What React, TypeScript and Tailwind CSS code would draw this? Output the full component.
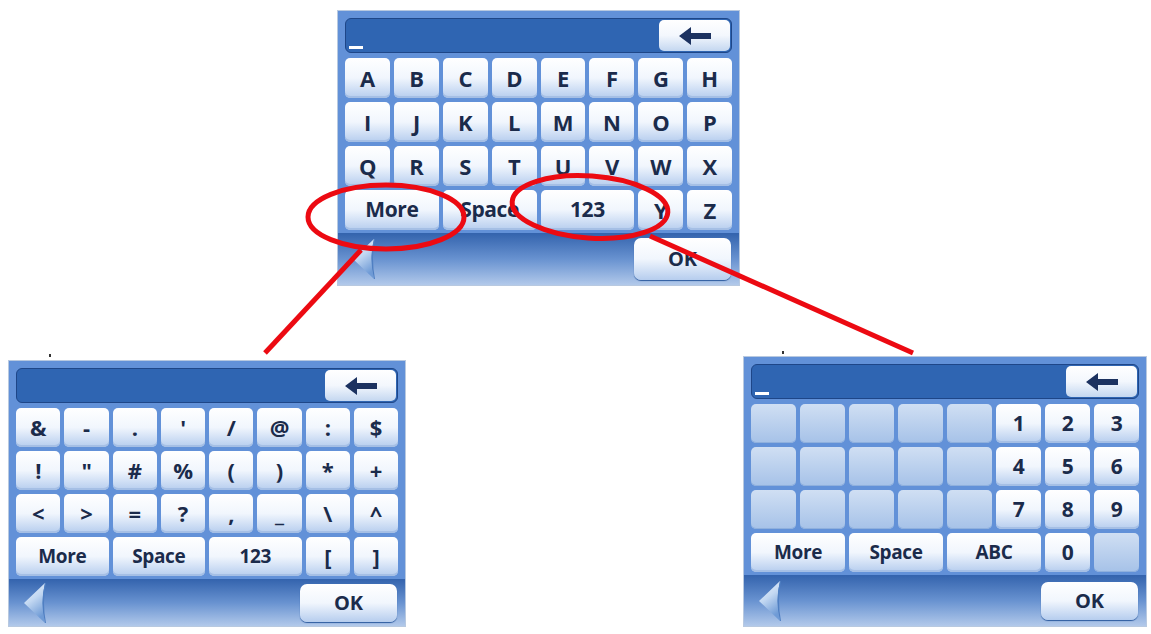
import React from 'react';

type KeyDef = { label?: string; span?: boolean; empty?: boolean };

const font = { fontFamily: '"Open Sans", "Noto Sans", Arial, sans-serif' };

const k = (s: string): KeyDef[] => s.split(' ').map(label => ({ label }));
const blanks = (n: number): KeyDef[] => Array.from({ length: n }, () => ({ empty: true }));

const alphaRows: KeyDef[][] = [
    k('A B C D E F G H'),
    k('I J K L M N O P'),
    k('Q R S T U V W X'),
    [{ label: 'More', span: true }, { label: 'Space', span: true }, { label: '123', span: true }, { label: 'Y' }, { label: 'Z' }],
];

const symbolRows: KeyDef[][] = [
    k('& - . \' / @ : $'),
    k('! " # % ( ) * +'),
    k('< > = ? , _ \\ ^'),
    [{ label: 'More', span: true }, { label: 'Space', span: true }, { label: '123', span: true }, { label: '[' }, { label: ']' }],
];

const numberRows: KeyDef[][] = [
    [...blanks(5), ...k('1 2 3')],
    [...blanks(5), ...k('4 5 6')],
    [...blanks(5), ...k('7 8 9')],
    [{ label: 'More', span: true }, { label: 'Space', span: true }, { label: 'ABC', span: true }, { label: '0' }, { empty: true }],
];

function BackArrow() {
    return (
        <svg width="32" height="18" viewBox="0 0 32 18">
            <path d="M0 9 L12 0 L12 6 L32 6 L32 12 L12 12 L12 18 Z" fill="#1c3260" />
        </svg>
    );
}

function PrevTriangle() {
    return (
        <svg width="24" height="42" viewBox="0 0 24 42">
            <defs>
                <linearGradient id="tri" x1="0" y1="0" x2="0.4" y2="1">
                    <stop offset="0" stopColor="#f2f7fd" />
                    <stop offset="0.5" stopColor="#c3d8f2" />
                    <stop offset="1" stopColor="#6f9bd6" />
                </linearGradient>
            </defs>
            <path d="M22 1 L1 21 L22 41 Q17 21 22 1 Z" fill="url(#tri)" />
            <path d="M22 1 Q17 21 22 41 L23 41 Q19 21 23 1 Z" fill="#4f7fc2" />
        </svg>
    );
}

function Key({ def, text, single }: { def: KeyDef; text: string; single: string }) {
    if (def.empty) {
        return (
            <div className={`${def.span ? 'col-span-2' : ''} rounded-[5px] bg-linear-to-b from-[#d0dff3] to-[#a6c2e8] shadow-[inset_0_-1px_0_#8fb0dd]`} />
        );
    }
    const size = def.label && def.label.length === 1 ? single : text;
    return (
        <div
            className={`${def.span ? 'col-span-2' : ''} ${size} flex items-center justify-center rounded-[5px] bg-linear-to-b from-white via-[#f1f6fd] to-[#b6cdee] font-bold tracking-[-0.02em] text-[#1b2b4b] shadow-[inset_0_-2px_0_#a5bfe5]`}
        >
            {def.label}
        </div>
    );
}

function Keyboard({
    rows,
    cursor,
    size,
    text,
    single,
    rowH,
    okH,
}: {
    rows: KeyDef[][];
    cursor?: boolean;
    size: string;
    text: string;
    single: string;
    rowH: string;
    okH: string;
}) {
    return (
        <div className={`${size} flex flex-col border border-[#b8c9e0] bg-[#6291d8] px-[7px] pt-[7px]`} style={font}>
            <div className="flex h-[35px] shrink-0 items-stretch justify-between rounded-[6px] border border-[#1e4688] bg-[#2f65b2] p-px">
                <div className="flex items-end pb-[2px] pl-[2px]">
                    {cursor && <span className="h-[3px] w-[14px] bg-white" />}
                </div>
                <div className="flex w-[71px] items-center justify-center rounded-[5px] bg-linear-to-b from-white via-[#f3f7fd] to-[#c4d7f0]">
                    <BackArrow />
                </div>
            </div>
            <div className={`mt-[5px] grid grid-cols-8 gap-1 ${rowH}`}>
                {rows.flat().map((def, i) => (
                    <Key key={i} def={def} text={text} single={single} />
                ))}
            </div>
            <div className="-mx-[7px] mt-[3px] flex flex-1 items-center justify-between bg-linear-to-b from-[#3363ad] via-[#6892d0] to-[#b2c9ea] pl-[14px] pr-[8px]">
                <PrevTriangle />
                <div
                    className={`${okH} flex w-[97px] items-center justify-center rounded-[7px] bg-linear-to-b from-white via-[#f1f6fd] to-[#b6cdee] text-[20px] font-bold text-[#1b2b4b] shadow-[0_1px_1px_#2c5a9e]`}
                >
                    OK
                </div>
            </div>
        </div>
    );
}

export default function App() {
    return (
        <div className="relative h-[634px] w-[1151px] overflow-hidden bg-white">
            <div className="pl-[337px] pt-[10px]">
                <Keyboard
                    rows={alphaRows}
                    cursor
                    size="w-[403px] h-[276px]"
                    text="text-[21px]"
                    single="text-[22px]"
                    rowH="auto-rows-[40px]"
                    okH="h-[42px]"
                />
            </div>
            <div className="mt-[70px] flex items-start justify-between pl-[8px] pr-[4px]">
                <div className="mt-[4px]">
                    <Keyboard
                        rows={symbolRows}
                        size="w-[398px] h-[267px]"
                        text="text-[19px]"
                        single="text-[22px]"
                        rowH="auto-rows-[39px]"
                        okH="h-[38px]"
                    />
                </div>
                <Keyboard
                    rows={numberRows}
                    cursor
                    size="w-[404px] h-[271px]"
                    text="text-[19px]"
                    single="text-[21px]"
                    rowH="auto-rows-[39px]"
                    okH="h-[38px]"
                />
            </div>

            <svg className="pointer-events-none absolute inset-0" width="1151" height="634" viewBox="0 0 1151 634">
                <ellipse cx="386" cy="217" rx="78" ry="32" fill="none" stroke="#ec0a12" strokeWidth="5" />
                <ellipse cx="590" cy="207" rx="78" ry="31" fill="none" stroke="#ec0a12" strokeWidth="5" transform="rotate(4 590 207)" />
                <line x1="265" y1="353" x2="361" y2="250" stroke="#ec0a12" strokeWidth="5" />
                <line x1="650" y1="236" x2="913" y2="353" stroke="#ec0a12" strokeWidth="5" />
                <rect x="49" y="354" width="2" height="3" fill="#333" />
                <rect x="782" y="351" width="2" height="3" fill="#333" />
            </svg>
        </div>
    );
}
